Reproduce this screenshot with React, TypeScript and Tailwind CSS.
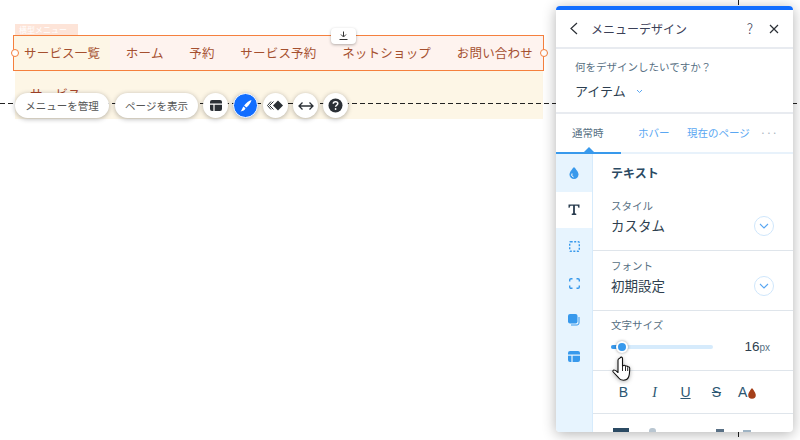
const jp = { fontFamily: '"Noto Sans CJK JP", "Noto Sans", sans-serif' };

function ChevronCircle() {
  return (
    <div className="w-[20px] h-[20px] rounded-full border border-[#cfe6fb] flex items-center justify-center bg-white">
      <svg width="10" height="6" viewBox="0 0 10 6" fill="none" stroke="#5aa7f2" strokeWidth="1.1"><path d="M1 1l4 4 4-4" /></svg>
    </div>
  );
}

function RailIcon({ active, children }: { active?: boolean; children: React.ReactNode }) {
  return <div className={`h-[36.6px] flex items-center justify-center ${active ? "bg-white" : ""}`}>{children}</div>;
}

function Circle({ children, className = "bg-white" }: { children: React.ReactNode; className?: string }) {
  return <div className={`w-[25px] h-[25px] rounded-full shadow-[0_1px_5px_rgba(0,0,0,0.3)] flex items-center justify-center ${className}`}>{children}</div>;
}

const items = ["サービス一覧", "ホーム", "予約", "サービス予約", "ネットショップ", "お問い合わせ"];

export default function App() {
  return (
    <div className="relative w-[800px] h-[440px] overflow-hidden bg-white" style={jp}>
      {/* free canvas: editor selection */}
      <div className="absolute left-[15px] top-[24px] w-[63px] h-[11px] bg-[#fde4d8] text-[8px] leading-[11px] text-white px-[4px]">横型メニュー</div>
      <div className="absolute left-[15px] top-[70px] w-[528px] h-[49px] bg-[#fdf6e6] overflow-hidden">
        <div className="pl-[15px] pt-[14px] text-[12.5px] leading-[20px] tracking-[0.2px] text-[#a8452a]">サービス</div>
      </div>
      <div className="absolute left-0 right-0 top-[103px] h-[1px] bg-[repeating-linear-gradient(90deg,#222_0_5px,transparent_5px_8px)]" />
      <div className="absolute left-[13px] top-[35px] w-[531px] h-[36px] border border-[#f5803e] bg-[#fef3ef] flex items-center justify-between pl-[10px] pr-[10px] text-[12.5px] tracking-[0.2px] text-[#a5502f]">
        <div className="absolute left-0 top-0 h-full w-[96px] bg-[#fdf6e6]" />
        {items.map((t) => <span key={t} className="relative">{t}</span>)}
      </div>
      <div className="absolute left-[11px] top-[49px] w-[8px] h-[8px] rounded-full bg-white border-[1.5px] border-[#f5803e]" />
      <div className="absolute left-[540px] top-[49px] w-[8px] h-[8px] rounded-full bg-white border-[1.5px] border-[#f5803e]" />
      <div className="absolute left-[331px] top-[28px] w-[25px] h-[16px] rounded-[4px] bg-white shadow-[0_1px_3px_rgba(0,0,0,0.3)] flex items-center justify-center">
        <svg width="9" height="10" viewBox="0 0 9 10" fill="none" stroke="#333" strokeWidth="1"><path d="M4.5 0.5v5M2 3.5l2.5 2.5L7 3.5M0.5 8.5h8" /></svg>
      </div>

      {/* floating toolbar */}
      <div className="absolute left-[15px] top-[93px] flex items-center gap-[5px]">
        <div className="h-[25px] w-[94px] mr-[1px] rounded-full bg-white shadow-[0_1px_5px_rgba(0,0,0,0.3)] flex items-center justify-center text-[10.5px] text-[#555] whitespace-nowrap">メニューを管理</div>
        <div className="h-[25px] w-[83px] rounded-full bg-white shadow-[0_1px_5px_rgba(0,0,0,0.3)] flex items-center justify-center text-[10.5px] text-[#555] whitespace-nowrap">ページを表示</div>
        <Circle>
          <svg width="12" height="11" viewBox="0 0 12 11" fill="#2b3036"><path d="M2 0h8a2 2 0 0 1 2 2v1.500H0V2a2 2 0 0 1 2-2zM0 4.700h3.400V11H2a2 2 0 0 1-2-2zM4.600 4.700H12V9a2 2 0 0 1-2 2H4.600z" /></svg>
        </Circle>
        <Circle className="bg-[#116dff] border border-white">
          <svg width="14" height="14" viewBox="0 0 14 14" fill="white"><path d="M12.500 1c-2.500.6-5.500 3-7.400 5.600l2.200 2C9.800 6.700 12 3.700 12.500 1zM4.500 7.400 6.500 9.300C6 11 4 12.300 1.500 12.500 2.800 11.400 3.200 9 4.500 7.400z" /></svg>
        </Circle>
        <Circle>
          <svg width="17" height="11" viewBox="0 0 17 11" fill="#2b3036"><path d="M11 0.500 16 5.500 11 10.500 6 5.500z" /><path d="M6.500 1.500 2.500 5.500l4 4M4 1.500 0.500 5.500 4 9.500" fill="none" stroke="#2b3036" strokeWidth="1" /></svg>
        </Circle>
        <Circle>
          <svg width="16" height="10" viewBox="0 0 16 10" fill="none" stroke="#2b3036" strokeWidth="1.300"><path d="M1 5h14M4.500 1.500 1 5l3.500 3.500M11.500 1.500 15 5l-3.500 3.500" /></svg>
        </Circle>
        <Circle>
          <svg width="15" height="15" viewBox="0 0 15 15">
            <circle cx="7.500" cy="7.500" r="7" fill="#2b3036" />
            <path d="M5.300 5.800c0-1.300 1-2.100 2.300-2.100s2.200.8 2.200 1.900c0 1.700-2.200 1.600-2.200 3.200" fill="none" stroke="white" strokeWidth="1.500" />
            <circle cx="7.600" cy="11" r="0.900" fill="white" />
          </svg>
        </Circle>
      </div>

      {/* ruler line behind the panel */}
      <div className="absolute left-[738px] top-0 h-[440px] w-[1px] bg-[repeating-linear-gradient(180deg,#222_0_5px,transparent_5px_8px)]" />

      {/* panel */}
      <div className="absolute left-[556px] top-[6px] w-[237px] h-[426px] bg-white rounded-[4px] overflow-hidden shadow-[0_2px_14px_rgba(0,0,0,0.3)] flex flex-col">
        <div className="h-[4px] bg-[#116dff] shrink-0" />
        <div className="h-[39px] shrink-0 flex items-center pl-[13px] pr-[14px] border-b-2 border-[#e8ebf0]">
          <svg width="10" height="13" viewBox="0 0 10 13" fill="none" stroke="#2b3036" strokeWidth="1.200"><path d="M8 1 2 6.500 8 12" /></svg>
          <span className="ml-[12px] text-[12px] text-[#3b4057]">メニューデザイン</span>
          <span className="ml-auto text-[14px] font-light text-[#3b4057]">?</span>
          <svg className="ml-[16px]" width="10" height="10" viewBox="0 0 10 10" fill="none" stroke="#2b3036" strokeWidth="1.200"><path d="M1 1l8 8M9 1 1 9" /></svg>
        </div>
        <div className="h-[65px] shrink-0 border-b-2 border-[#e8ebf0] pl-[19px] pt-[10px]">
          <div className="text-[10.5px] leading-[16px] text-[#577083]">何をデザインしたいですか？</div>
          <div className="mt-[6px] flex items-center gap-[10px]">
            <span className="text-[13px] leading-[20px] text-[#2b3e50]">アイテム</span>
            <svg width="7" height="5" viewBox="0 0 7 5" fill="none" stroke="#5aa7f2" strokeWidth="1"><path d="M1 1l2.500 2.500L6 1" /></svg>
          </div>
        </div>
        <div className="relative h-[40px] shrink-0 border-b-2 border-[#e8f2fb] flex items-center text-[10.5px]">
          <span className="absolute left-[16px] text-[#577083]">通常時</span>
          <span className="absolute left-[82px] text-[#5aa7f2]">ホバー</span>
          <span className="absolute left-[131px] text-[#5aa7f2] whitespace-nowrap">現在のページ</span>
          <span className="absolute left-[204px] text-[#a8b3bd]">···</span>
          <div className="absolute left-0 bottom-[-2px] w-[65px] h-[2px] bg-[#3899ec]" />
          <div className="absolute left-[28px] bottom-0 w-0 h-0 border-x-[5px] border-x-transparent border-b-[5px] border-b-[#3899ec]" />
        </div>
        <div className="flex-1 flex min-h-0">
          <div className="w-[37px] shrink-0 bg-[#e7f4fe] border-r border-[#d6ebfc] pt-[1px]">
            <RailIcon>
              <svg width="10" height="12" viewBox="0 0 10 12"><path d="M5 0C5 0 .5 4.500.5 7.500a4.500 4.500 0 0 0 9 0C9.500 4.500 5 0 5 0z" fill="#3899ec" /><path d="M3 6.500a2.500 2.500 0 0 0 1.500 3.500" fill="none" stroke="white" strokeWidth="1" /></svg>
            </RailIcon>
            <RailIcon active>
              <svg width="12" height="11" viewBox="0 0 13 12" fill="#2b3e50"><path d="M0.500 0.500h12V4h-1.300c-.2-1.300-.6-2-1.700-2H7.500v8.200l1.500.4V12H4v-1.400l1.500-.4V2h-2C2.400 2 2 2.700 1.800 4H.5z" /></svg>
            </RailIcon>
            <RailIcon>
              <svg width="11" height="11" viewBox="0 0 11 11" fill="none" stroke="#3899ec" strokeWidth="1.400" strokeDasharray="2 1.500"><rect x="0.700" y="0.700" width="9.600" height="9.600" rx="1" /></svg>
            </RailIcon>
            <RailIcon>
              <svg width="11" height="11" viewBox="0 0 11 11" fill="none" stroke="#3899ec" strokeWidth="1.400"><path d="M0.700 3.500V2A1.300 1.300 0 0 1 2 .7h1.500M7.500.7H9A1.300 1.300 0 0 1 10.300 2v1.500M10.300 7.500V9A1.300 1.300 0 0 1 9 10.300H7.500M3.500 10.300H2A1.300 1.300 0 0 1 .7 9V7.500" /></svg>
            </RailIcon>
            <RailIcon>
              <svg width="12" height="12" viewBox="0 0 12 12" fill="#3899ec"><rect x="0" y="0" width="9.500" height="9.500" rx="2" /><path d="M11 3v6a2 2 0 0 1-2 2H3" fill="none" stroke="#3899ec" strokeWidth="1" /></svg>
            </RailIcon>
            <RailIcon>
              <svg width="12" height="11" viewBox="0 0 12 11" fill="#3899ec"><path d="M2 0h8a2 2 0 0 1 2 2v1.500H0V2a2 2 0 0 1 2-2zM0 4.700h3.400V11H2a2 2 0 0 1-2-2zM4.600 4.700H12V9a2 2 0 0 1-2 2H4.600z" /></svg>
            </RailIcon>
          </div>
          <div className="flex-1 min-w-0 flex flex-col">
            <div className="h-[38px] shrink-0 pl-[18px] flex items-center text-[12px] font-bold text-[#2b4a63]">テキスト</div>
            <div className="h-[59px] shrink-0 border-b border-[#dfe5eb] pl-[18px] pr-[19px] flex items-end justify-between pb-[14px]">
              <div className="mb-[1px]">
                <div className="text-[10.5px] leading-[14px] text-[#577083]">スタイル</div>
                <div className="mt-[2px] text-[13.5px] leading-[20px] text-[#2f3f4f]">カスタム</div>
              </div>
              <ChevronCircle />
            </div>
            <div className="h-[60px] shrink-0 border-b border-[#dfe5eb] pl-[18px] pr-[19px] flex items-end justify-between pb-[14px]">
              <div className="mb-[1px]">
                <div className="text-[10.5px] leading-[14px] text-[#577083]">フォント</div>
                <div className="mt-[2px] text-[13.5px] leading-[20px] text-[#2f3f4f]">初期設定</div>
              </div>
              <ChevronCircle />
            </div>
            <div className="h-[60px] shrink-0 border-b border-[#dfe5eb] pl-[18px] pr-[23px] pt-[7px]">
              <div className="text-[10.5px] leading-[14px] text-[#577083]">文字サイズ</div>
              <div className="mt-[5px] flex items-center h-[20px]">
                <div className="relative w-[102px] h-[4px] rounded-full bg-[#d6ebfc]">
                  <div className="absolute left-0 top-0 h-[4px] w-[10px] rounded-full bg-[#3899ec]" />
                  <div className="absolute left-[5px] top-[-4px] w-[12px] h-[12px] rounded-full bg-[#3899ec] border-[2px] border-white shadow-[0_0_3px_rgba(0,0,0,0.4)]" />
                </div>
                <span className="ml-auto text-[13.5px] text-[#2f3f4f]" style={{ fontFamily: '"Liberation Sans", sans-serif' }}>16<span className="text-[10px] text-[#577083]">px</span></span>
              </div>
            </div>
            <div className="h-[43px] shrink-0 border-b border-[#dfe5eb] pl-[15px] flex items-center text-[#2b5672] text-[14px]" style={{ fontFamily: '"Liberation Sans", sans-serif' }}>
              <span className="w-[31px] flex justify-center">B</span>
              <span className="w-[31px] flex justify-center italic" style={{ fontFamily: '"Liberation Serif", serif' }}>I</span>
              <span className="w-[31px] flex justify-center underline">U</span>
              <span className="w-[31px] flex justify-center line-through">S</span>
              <span className="relative w-[31px] pl-[6px]">A<svg className="absolute left-[16px] top-[6px]" width="8" height="11" viewBox="0 0 8 11" fill="#a5401a"><path d="M4 0S.2 4.500.2 7a3.800 3.800 0 0 0 7.600 0C7.800 4.500 4 0 4 0z" /></svg></span>
            </div>
            <div className="flex-1 relative overflow-hidden">
              <div className="absolute left-[20px] top-[14px] w-[16px] h-[6px] bg-[#2b4a63]" />
              <div className="absolute left-[56px] top-[14px] w-[7px] h-[6px] rounded-full bg-[#b9c6d1]" />
              <div className="absolute left-[123px] top-[15px] w-[8px] h-[6px] bg-[#5a7186]" />
              <div className="absolute left-[150px] top-[16px] w-[8px] h-[6px] bg-[#9fb4c4]" />
            </div>
          </div>
        </div>
      </div>

      {/* hand cursor */}
      <svg className="absolute left-[612px] top-[356px] drop-shadow-[0_1px_2px_rgba(0,0,0,0.3)]" width="22" height="26" viewBox="0 0 22 26">
        <path d="M8 2c1-1.500 2.500-1 2.500.5V10l1-.5c1-.5 2 0 2 .8 1-.6 2-.2 2.200.6 1-.4 2 0 2 1.300 0 4-.3 7-1.200 9-.7 1.600-2.500 3-5 3s-4-1-5-2.500L1.200 16C.5 15 1 14 2 14c1 0 2.500 1 4 2.500V4c0-.8 1-1.500 2-2z" fill="white" stroke="#111" strokeWidth="1.100" strokeLinejoin="round" />
        <path d="M10.500 10v5M13.500 10.500v4.500M15.700 11.500v3.500" stroke="#111" strokeWidth="0.900" fill="none" />
      </svg>
    </div>
  );
}
